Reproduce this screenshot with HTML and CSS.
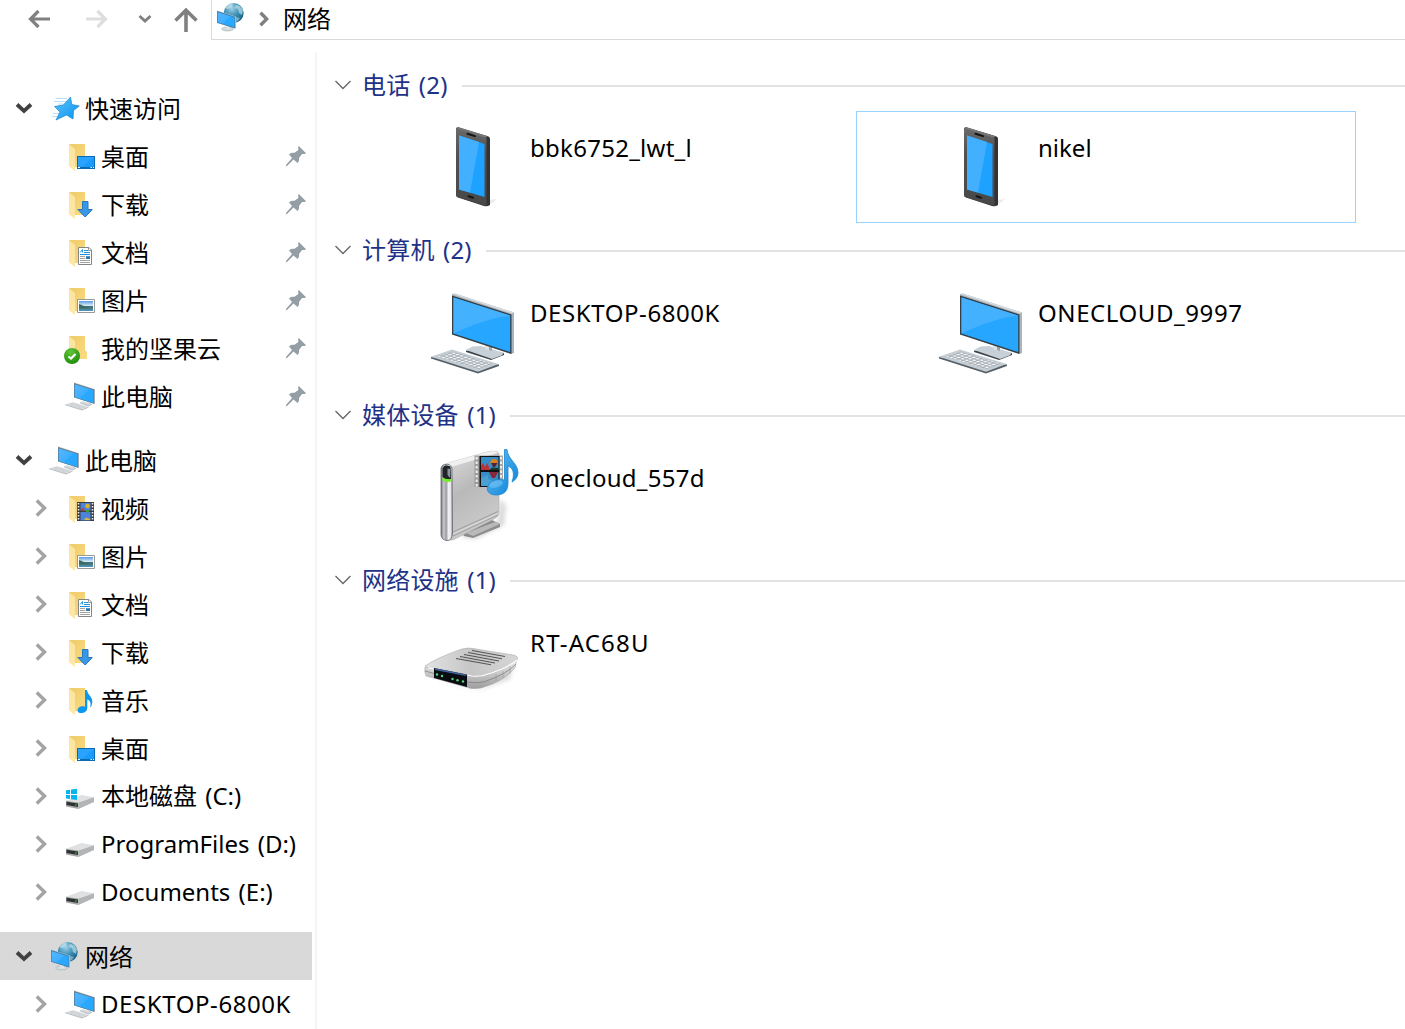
FILE: index.html
```html
<!DOCTYPE html>
<html lang="zh-CN">
<head>
<meta charset="utf-8">
<title>网络</title>
<link rel="stylesheet" href="styles.css">
</head>
<body>
<svg class="sprite" aria-hidden="true">
  <defs>
    <linearGradient id="g-screen" x1="0" y1="0" x2="1" y2="1"><stop offset="0" stop-color="#55b6ff"/><stop offset=".5" stop-color="#3eafff"/><stop offset=".54" stop-color="#2aa8ff"/><stop offset="1" stop-color="#2aa8ff"/></linearGradient>
    <linearGradient id="g-fold" x1="0" y1="0" x2="1" y2="1"><stop offset="0" stop-color="#efcb69"/><stop offset="1" stop-color="#fbdc84"/></linearGradient>
    <linearGradient id="g-flap" x1="0" y1="0" x2="0" y2="1"><stop offset="0" stop-color="#fbe3a0"/><stop offset="1" stop-color="#ffe9a8"/></linearGradient>
    <linearGradient id="g-star" x1="0" y1="0" x2="1" y2="1"><stop offset="0" stop-color="#5cc4fb"/><stop offset="1" stop-color="#0a92f0"/></linearGradient>
    <linearGradient id="g-phone" x1="0" y1="0" x2="0" y2="1"><stop offset="0" stop-color="#6a6a6a"/><stop offset=".35" stop-color="#505050"/><stop offset="1" stop-color="#484848"/></linearGradient>
    <linearGradient id="g-case" x1="0" y1="0" x2=".4" y2="1"><stop offset="0" stop-color="#dedede"/><stop offset=".5" stop-color="#b9b9b9"/><stop offset="1" stop-color="#cbcbcb"/></linearGradient>
    <linearGradient id="g-front" x1="0" y1="0" x2="1" y2="0"><stop offset="0" stop-color="#77777b"/><stop offset=".25" stop-color="#c9cacf"/><stop offset=".45" stop-color="#9a9ba2"/><stop offset=".65" stop-color="#f0f0f5"/><stop offset=".85" stop-color="#e4e5ea"/><stop offset="1" stop-color="#8b8b90"/></linearGradient>
    <linearGradient id="g-note" x1="0" y1="0" x2="1" y2="1"><stop offset="0" stop-color="#67c2f4"/><stop offset="1" stop-color="#087fd8"/></linearGradient>
    <linearGradient id="g-router" x1="0" y1="0" x2="1" y2="0"><stop offset="0" stop-color="#e2e2e2"/><stop offset=".5" stop-color="#c6c6c6"/><stop offset="1" stop-color="#d6d6d6"/></linearGradient>
    <linearGradient id="g-rim" x1="0" y1="0" x2="0" y2="1"><stop offset="0" stop-color="#f1f1f1"/><stop offset="1" stop-color="#9d9d9d"/></linearGradient>
    <radialGradient id="g-globe" cx=".4" cy=".25" r=".8"><stop offset="0" stop-color="#a3d3e6"/><stop offset=".5" stop-color="#3c8fb5"/><stop offset="1" stop-color="#15567c"/></radialGradient>
    <radialGradient id="g-ok" cx=".4" cy=".25" r=".8"><stop offset="0" stop-color="#62c536"/><stop offset="1" stop-color="#1b8a0b"/></radialGradient>
    <linearGradient id="g-photo" x1="0" y1="0" x2="0" y2="1"><stop offset="0" stop-color="#5b9be0"/><stop offset=".5" stop-color="#e4f3fb"/><stop offset=".55" stop-color="#3f7272"/><stop offset="1" stop-color="#5594bb"/></linearGradient>
    <filter id="f-soft" x="-30%" y="-30%" width="160%" height="160%"><feGaussianBlur stdDeviation="2.2"/></filter>
    <pattern id="p-keys" width="4" height="3.4" patternUnits="userSpaceOnUse" patternTransform="matrix(1 .35 -1 .42 0 0)"><rect x=".5" y=".5" width="2.9" height="2.3" fill="#f4f5f6"/></pattern>
  </defs>

  <symbol id="folder" viewBox="0 0 32 32">
    <path d="M5 4H21V18L23 20V27H10Z" fill="url(#g-fold)"/>
    <path d="M5 4L11 9V31L5 26.5Z" fill="url(#g-flap)"/>
  </symbol>
  <symbol id="desktop" viewBox="0 0 32 32">
    <use href="#folder"/>
    <path d="M13 16H31V29H13Z" fill="#0b6bb0"/><path d="M14 17H30V27H14Z" fill="#179bff"/><path d="M14 17H30L18 27H14Z" fill="#2aa3ff"/>
    <path d="M14 27.5H16M26.500 27.500H28M29 27.500H30" stroke="#fff"/>
  </symbol>
  <symbol id="download" viewBox="0 0 32 32">
    <use href="#folder"/>
    <path d="M18.500 13.500H24V21.500H28.300L21.200 29L13.800 21.500H18.500Z" fill="#3a97e8" stroke="#2478bf"/>
  </symbol>
  <symbol id="document" viewBox="0 0 32 32">
    <use href="#folder"/>
    <path d="M14.500 11.500H25L27.500 14V28.500H14.500Z" fill="#fff" stroke="#858585"/>
    <path d="M24.500 11.500V14.500H27.500" fill="none" stroke="#999"/>
    <path d="M16 16.500L18.500 13.500V16.500M20 14.500H24M20 16.500H26M16 18.500H26" fill="none" stroke="#2493dd"/>
    <path d="M16 20.500H21M16 22.500H21M16 24.500H26M16 26.500H26" stroke="#a3a3a3"/>
    <path d="M22 20.200H26V23H22Z" fill="#2b76af"/>
  </symbol>
  <symbol id="picture" viewBox="0 0 32 32">
    <use href="#folder"/>
    <path d="M13.500 15.500H30.500V28.500H13.500Z" fill="#fff" stroke="#999"/>
    <path d="M15 17H29V27H15Z" fill="url(#g-photo)"/>
    <path d="M15 20C19 21 22 24 29 24.500H15Z" fill="#3c6d63"/>
  </symbol>
  <symbol id="video" viewBox="0 0 32 32">
    <use href="#folder"/>
    <path d="M13 10H30V29H13Z" fill="#3d3d40"/>
    <path d="M14.500 11V29M28.500 11V29" stroke="#f0f0f0" stroke-width="1.600" stroke-dasharray="1.500 1.500"/>
    <path d="M16.500 11H26.500V18.500H16.500ZM16.500 20H26.500V28.500H16.500Z" fill="#4b83df"/>
    <circle cx="23.500" cy="14" r="2.300" fill="#d9b32a"/><path d="M17 17.500L19 16L21 18.500H17Z" fill="#cf3527"/><path d="M21 18H26L23.500 22Z" fill="#3b9b3b"/><path d="M20 28L22 25.500L26 27V28Z" fill="#e1ba35"/>
  </symbol>
  <symbol id="music" viewBox="0 0 32 32">
    <use href="#folder"/>
    <path d="M21 6H23C23.500 11 29 13 28.300 18.500Q28 22 26 23.500C27.300 19.500 26.500 16.500 23.300 15.500V24C23 30 13.500 30.500 13.500 26.500C13.500 23 18 21.500 21 22.700Z" fill="#0b98ee"/>
  </symbol>
  <symbol id="nutstore" viewBox="0 0 32 32">
    <path d="M5 4H21V18L23 20V27H10Z" fill="url(#g-fold)"/><path d="M5 4L11 9V30L5 26Z" fill="url(#g-flap)"/>
    <circle cx="8" cy="24" r="8" fill="url(#g-ok)"/><path d="M4.500 24.500L7 26.500L11.500 22" fill="none" stroke="#fff" stroke-width="2.200"/>
  </symbol>
  <symbol id="pc" viewBox="0 0 32 32">
    <path d="M10 2.600L31 9.200V24L10 17.500Z" fill="#a3aeb6"/>
    <path d="M10 3.300L29.900 9.500V23.700L10 17.300Z" fill="#5a7486"/>
    <path d="M10.700 4.300L29.300 10V22.900L10.700 17Z" fill="url(#g-screen)"/>
    <path d="M24 22.200L27 23.100V25L24 24Z" fill="#c3cbd0"/><path d="M16 22.500L19 21.300L28 24L24 26Z" fill="#d3d9dd"/><path d="M16 22.800L24 26L28 24.300" fill="none" stroke="#a0a8ad" stroke-width=".7"/>
    <path d="M1 24.500L8.500 22L24.500 27L18 30Z" fill="#e2e5e7"/><path d="M1 24.700L18 30L24.500 27.200" fill="none" stroke="#aab1b6" stroke-width=".8"/>
    <path d="M4.500 24.500L18.500 28.800M6.500 23.700L20.500 28M8.500 23L22.500 27.300" stroke="#b4babf" stroke-width=".8" stroke-dasharray="1.300 .8"/>
  </symbol>
  <symbol id="drive" viewBox="0 0 32 32">
    <path d="M2 20.700L17.500 15L30 17.200L14.500 22.500Z" fill="#dfe0e2"/>
    <path d="M14.500 22.500L30 17.200V22L14.500 29Z" fill="#b2b4b6"/>
    <path d="M2 20.700L14.500 22.500V29L2 26.500Z" fill="#a4a5a8"/><path d="M2.500 21.700L14 23.500V27L2.500 25Z" fill="#2f3133"/><path d="M11 25H12.800" stroke="#3add3b" stroke-width="1.200"/>
  </symbol>
  <symbol id="sysdrive" viewBox="0 0 32 32">
    <use href="#drive"/>
    <path d="M2 10.300L6 9.700V14H2ZM7 9.500L13 8.800V14H7ZM2 15H6V19L2 18.500ZM7 15H13V20L7 19.200Z" fill="#08b4ee"/>
  </symbol>
  <symbol id="star" viewBox="0 0 32 32">
    <path d="M8 6.500H19M6 9.500H18M10 12H18M5 21.500H12M4 24.500H11" stroke="#a5d6f4" stroke-width=".8"/>
    <path d="M22.500 5L23.800 12.500L31.300 14L25.500 18.500L25 27L18.500 23L8 28L12 20L6.500 14.500L15.500 13Z" fill="url(#g-star)" stroke="#1686cc" stroke-width=".7"/>
  </symbol>
  <symbol id="network" viewBox="0 0 32 32">
    <circle cx="19.700" cy="12" r="10" fill="url(#g-globe)"/>
    <path d="M11 7L15 3L19 2.500L18 6L14 8ZM22 4L26 5L29 9L28 14L25 12L24 8L21 7Z" fill="#c7e5ed" opacity=".65"/><path d="M22 16L26 17L24 20L22 21Z" fill="#8bbacb" opacity=".8"/>
    <ellipse cx="13.500" cy="28" rx="5.800" ry="2" fill="#d3dade" stroke="#98a3a9" stroke-width=".5"/><path d="M12 25H16V28H12Z" fill="#dde4e8"/>
    <path d="M3 9.500L22 15.500V27.500L3 22Z" fill="#b9c7cf"/><path d="M3 10L21.200 15.700V27.500L3 21.800Z" fill="#3d80ad"/>
    <path d="M3.700 11.200L20.500 16.400V26.300L3.700 21.200Z" fill="url(#g-screen)"/>
  </symbol>
  <symbol id="pin" viewBox="0 0 20 20">
    <path d="M12.800 0L20 7.200C18 8.500 17 8 16 8L13 12C13.500 14.500 12.500 16 11.500 17L7.500 13.500L1 20H0V19L6 12L3 8.500C4.500 7 6.500 6.500 8 7L12.500 4C12 2.500 12 1 12.800 0Z" fill="#939ea5"/>
  </symbol>
  <symbol id="open" viewBox="0 0 18 12"><path d="M2 2.500L9 9L16 2.500" fill="none" stroke="#404040" stroke-width="3.800"/></symbol>
  <symbol id="closed" viewBox="0 0 12 18"><path d="M1.800 1.500L9.500 9L1.800 16.500" fill="none" stroke="#a3a3a3" stroke-width="3.400"/></symbol>
  <symbol id="collapse" viewBox="0 0 16 10"><path d="M.5 1L8 8.500L15.500 1" fill="none" stroke="#666" stroke-width="1.300"/></symbol>

  <symbol id="phone" viewBox="0 0 96 96">
    <path d="M58 82L73 80L67 85Z" fill="#ddd" opacity=".6"/>
    <path d="M34 8.300Q32 8 32 10.500V76Q32 77.500 34 78.500L60 87Q63 88 66 86V20Q66 18 64 17.300Z" fill="#333"/>
    <path d="M34 8.800Q32 8.500 32 10.500V76Q32 77.500 34 78.200L62.500 87V19Z" fill="url(#g-phone)"/>
    <path d="M35 8.300L64 17.500L61 18.800L33 9.500Z" fill="#777"/>
    <path d="M35 16.500L60.500 25V78L35 70.500Z" fill="#1da2ff"/><path d="M35 16.500L55 23L46 73.500L35 70.500Z" fill="#43b0ff"/>
    <path d="M43.500 14.700L51 17.100M44.500 77.300L49 78.700" stroke="#151515" stroke-width="2" stroke-linecap="round"/>
  </symbol>
  <symbol id="computer" viewBox="0 0 96 96">
    <path d="M42 66.500V68L67 76L80 71V69Z" fill="#3b444a"/><path d="M42 66L48.500 62.500L57 62L80 68.800L77.500 71.500L68 75Z" fill="#c6d0d6"/><path d="M61 59L67.500 62V67L61 65Z" fill="#e0e3e5"/><path d="M65 62L68 63V67L65 66Z" fill="#9aa4aa"/>
    <path d="M28 10L31 9.500L90 28.500V69L87 70L28 50Z" fill="#aab4bb"/><path d="M28 10L31 9.500L90 28.500L87.500 29.500Z" fill="#d6dce0"/>
    <path d="M28 11.500L87.500 30.500V70L28 50.500Z" fill="#343f46"/>
    <path d="M29.500 13.500L86.200 31.500V68L29.500 49.500Z" fill="#27a6ff"/><path d="M29.500 13.500L86.200 31.500L84 32Q63 34 29.500 49.500Z" fill="#44b1ff"/>
    <path d="M7 73V74.500L54 89.500L75 82V80.500Z" fill="#566068"/><path d="M7 72.700L28 65.500L74.500 80L54 87.700Z" fill="#c4cdd3"/>
    <path d="M14 72.500L29 67.500L69 80L54 85Z" fill="#9ba5ac"/><path d="M14 72.500L29 67.500L69 80L54 85Z" fill="url(#p-keys)"/>
  </symbol>
  <symbol id="media" viewBox="0 0 96 96">
    <path d="M35 88L74 72L76 50L82 56L80 76L52 90Z" fill="#777" opacity=".28" filter="url(#f-soft)"/>
    <path d="M38 84L68 71L76 75V78L49 89L40 87Z" fill="#8c8c8c"/><path d="M42 84L71 73L76 75L49 87Z" fill="#b9b9b9"/>
    <path d="M24 14L65 2.500Q74 1 75 5V64Q74 68 70 70L29 91L22 91Z" fill="url(#g-case)" stroke="#a5a5a5" stroke-width=".5"/>
    <path d="M20 15L65 2.500Q72 1 74 4L27 18Z" fill="#efefef"/>
    <path d="M29 83L74 62.500M29 87L74 66" stroke="#929292" stroke-width=".8"/><path d="M29 85L74 64.500" stroke="#dcdcdc"/>
    <path d="M17 19Q18 15 23 15Q28 16 28 20L28.500 84Q28 92 23 91.500Q17.500 91 17 86Z" fill="url(#g-front)" stroke="#68686c" stroke-width=".8"/>
    <path d="M18.500 19Q21 15 26.500 17.500L27 30Q22 32 18.500 28Z" fill="#202428"/><path d="M23.500 19.500L26 20V29L23.500 26Z" fill="#8996a2"/>
    <path d="M18.500 28.500Q22 31 27.500 30V32.300Q22 34 18.500 31Z" fill="#70f31e"/>
    <path d="M50.500 6.500H79V38H50.500Z" fill="#8d8d8d" opacity=".75"/>
    <path d="M52.700 8V38M77 8V38" stroke="#eee" stroke-width="2" stroke-dasharray="2.500 2"/>
    <path d="M55.500 7H75.500V38H55.500Z" fill="#111"/><path d="M57 8H74.500V21H57ZM57 23H74.500V37H57Z" fill="#368ec6"/>
    <path d="M57 21V17L59 14L61 18L63 14L65 18V21Z" fill="#bd2f39"/><circle cx="70" cy="13.500" r="3.600" fill="#dc811f"/><path d="M67 14H73.500L71 18H69Z" fill="#4b2341"/><path d="M65 21L68 18.500L74.500 19V21Z" fill="#173c28"/>
    <path d="M65 23H74L71 29H68Z" fill="#84283a"/><path d="M57 29L64 26V30L70 32L67 37H57Z" fill="#4a9fd5"/>
    <path d="M80.500 .5H83C84 11 94 14 94 24Q93.500 30 88 33C91 24 89 19 84 17V34C84 41 81 46 72 46C64 46 61 40 65 35C68 31 75 29.500 80.500 31Z" fill="url(#g-note)" stroke="#1685d0" stroke-width=".8"/>
    <ellipse cx="72" cy="35" rx="7" ry="3.500" fill="#7dc9f5" opacity=".55" transform="rotate(-15 72 35)"/>
  </symbol>
  <symbol id="router" viewBox="0 0 96 96">
    <path d="M10 68L55 75L90 56V50L86 65L55 76Z" fill="#777" opacity=".28" filter="url(#f-soft)"/>
    <path d="M1 53Q0 58 2 62L47 74.500Q56 75.500 63 72Q81 66 91 54L93 45L56 62Z" fill="url(#g-rim)" stroke="#aaa" stroke-width=".5"/>
    <path d="M1 52Q12 44 38 35Q44 33 52 35L89 41Q95 42 93 46Q81 56 62 61Q55 63 48 62L4 54Z" fill="url(#g-router)" stroke="#adadad" stroke-width=".6"/>
    <path d="M4 54L48 62Q57 63 64 60Q82 55 93 46" fill="none" stroke="#fff" stroke-width="1.200"/>
    <path d="M1 57L10 59.500M43 68Q57 70 65 66Q82 60 92 50" fill="none" stroke="#777" stroke-width=".7"/><path d="M72 60V67M79 57V64M86 52V60" stroke="#999" stroke-width=".6"/>
    <path d="M48 36.500L81 42.500M44 38.500L78 44.800M40 40.500L75 47M36 42.500L71 49M32 44.500L67 50.700" stroke="#555" stroke-width="1.100"/>
    <path d="M10 54L43 60.500V73L10 64Z" fill="#090d12"/><path d="M11 54.300L42 60.500V62L11 56Z" fill="#40659e"/>
    <g fill="#55d979"><circle cx="13" cy="60.500" r="1.200"/><circle cx="18" cy="62" r="1.200"/><circle cx="28.500" cy="65" r="1.200"/><circle cx="33.500" cy="66.300" r="1.200"/><circle cx="39" cy="67.500" r="1.200"/></g>
  </symbol>
</svg>

<header class="topbar">
  <nav class="nav">
    <svg class="arrow" viewBox="0 0 22 20"><path d="M22 10H3M10.500 2L2.500 10L10.500 18" fill="none" stroke="#808080" stroke-width="3.200"/></svg>
    <svg class="arrow forward" viewBox="0 0 22 20"><path d="M0 10H19M11.500 2L19.500 10L11.500 18" fill="none" stroke="#dedede" stroke-width="3.200"/></svg>
    <svg class="recent" viewBox="0 0 14 10"><path d="M1.500 2L7 7L12.500 2" fill="none" stroke="#808080" stroke-width="2.800"/></svg>
    <svg class="up" viewBox="0 0 24 24"><path d="M12 24V2.500M1.500 12.500L12 2.200L22.500 12.500" fill="none" stroke="#808080" stroke-width="3.600"/></svg>
  </nav>
  <div class="address">
    <svg class="icon"><use href="#network"/></svg>
    <svg class="crumb" viewBox="0 0 10 16"><path d="M1.500 1.800L7.700 8L1.500 14.200" fill="none" stroke="#808080" stroke-width="3.400"/></svg>
    <span class="label">网络</span>
  </div>
</header>

<div class="panes">
  <aside class="tree">
    <section class="branch">
      <div class="row root"><svg class="open"><use href="#open"/></svg><svg class="icon"><use href="#star"/></svg><span class="label zh">快速访问</span></div>
      <div class="row"><svg class="icon"><use href="#desktop"/></svg><span class="label zh">桌面</span><svg class="pin"><use href="#pin"/></svg></div>
      <div class="row"><svg class="icon"><use href="#download"/></svg><span class="label zh">下载</span><svg class="pin"><use href="#pin"/></svg></div>
      <div class="row"><svg class="icon"><use href="#document"/></svg><span class="label zh">文档</span><svg class="pin"><use href="#pin"/></svg></div>
      <div class="row"><svg class="icon"><use href="#picture"/></svg><span class="label zh">图片</span><svg class="pin"><use href="#pin"/></svg></div>
      <div class="row"><svg class="icon"><use href="#nutstore"/></svg><span class="label zh">我的坚果云</span><svg class="pin"><use href="#pin"/></svg></div>
      <div class="row"><svg class="icon"><use href="#pc"/></svg><span class="label zh">此电脑</span><svg class="pin"><use href="#pin"/></svg></div>
    </section>
    <section class="branch">
      <div class="row root"><svg class="open"><use href="#open"/></svg><svg class="icon"><use href="#pc"/></svg><span class="label zh">此电脑</span></div>
      <div class="row"><svg class="closed"><use href="#closed"/></svg><svg class="icon"><use href="#video"/></svg><span class="label zh">视频</span></div>
      <div class="row"><svg class="closed"><use href="#closed"/></svg><svg class="icon"><use href="#picture"/></svg><span class="label zh">图片</span></div>
      <div class="row"><svg class="closed"><use href="#closed"/></svg><svg class="icon"><use href="#document"/></svg><span class="label zh">文档</span></div>
      <div class="row"><svg class="closed"><use href="#closed"/></svg><svg class="icon"><use href="#download"/></svg><span class="label zh">下载</span></div>
      <div class="row"><svg class="closed"><use href="#closed"/></svg><svg class="icon"><use href="#music"/></svg><span class="label zh">音乐</span></div>
      <div class="row"><svg class="closed"><use href="#closed"/></svg><svg class="icon"><use href="#desktop"/></svg><span class="label zh">桌面</span></div>
      <div class="row"><svg class="closed"><use href="#closed"/></svg><svg class="icon"><use href="#sysdrive"/></svg><span class="label">本地磁盘 (C:)</span></div>
      <div class="row"><svg class="closed"><use href="#closed"/></svg><svg class="icon"><use href="#drive"/></svg><span class="label">ProgramFiles (D:)</span></div>
      <div class="row"><svg class="closed"><use href="#closed"/></svg><svg class="icon"><use href="#drive"/></svg><span class="label">Documents (E:)</span></div>
    </section>
    <section class="branch">
      <div class="row root selected"><svg class="open"><use href="#open"/></svg><svg class="icon"><use href="#network"/></svg><span class="label zh">网络</span></div>
      <div class="row"><svg class="closed"><use href="#closed"/></svg><svg class="icon"><use href="#pc"/></svg><span class="label caps">DESKTOP-6800K</span></div>
    </section>
  </aside>

  <main class="content">
    <section class="group">
      <h2 class="heading"><svg class="collapse"><use href="#collapse"/></svg><span class="title">电话 (2)</span></h2>
      <div class="tiles">
        <div class="tile"><svg class="device"><use href="#phone"/></svg><span class="name">bbk6752_lwt_l</span></div>
        <div class="tile focused"><svg class="device"><use href="#phone"/></svg><span class="name short">nikel</span></div>
      </div>
    </section>
    <section class="group">
      <h2 class="heading"><svg class="collapse"><use href="#collapse"/></svg><span class="title">计算机 (2)</span></h2>
      <div class="tiles">
        <div class="tile"><svg class="device"><use href="#computer"/></svg><span class="name caps">DESKTOP-6800K</span></div>
        <div class="tile"><svg class="device"><use href="#computer"/></svg><span class="name caps">ONECLOUD_9997</span></div>
      </div>
    </section>
    <section class="group">
      <h2 class="heading"><svg class="collapse"><use href="#collapse"/></svg><span class="title">媒体设备 (1)</span></h2>
      <div class="tiles">
        <div class="tile"><svg class="device"><use href="#media"/></svg><span class="name">onecloud_557d</span></div>
      </div>
    </section>
    <section class="group">
      <h2 class="heading"><svg class="collapse"><use href="#collapse"/></svg><span class="title">网络设施 (1)</span></h2>
      <div class="tiles">
        <div class="tile"><svg class="device"><use href="#router"/></svg><span class="name model">RT-AC68U</span></div>
      </div>
    </section>
  </main>
</div>
</body>
</html>
```
FILE: styles.css
```css
* { box-sizing: border-box; }

body {
  margin: 0;
  height: 1029px;
  overflow: hidden;
  background: #fff;
  color: #000;
  font: 24px/32px "Noto Sans", "Noto Sans CJK SC", sans-serif;
}

svg { display: block; flex: none; }
.sprite { position: absolute; width: 0; height: 0; }

/* Navigation and address bar */
.topbar { display: flex; height: 40px; }
.nav { display: flex; align-items: center; width: 211px; height: 38px; padding-left: 28px; }
.arrow { width: 22px; height: 20px; }
.forward { margin-left: 36px; }
.recent { width: 14px; height: 10px; margin-left: 30px; }
.up { width: 24px; height: 24px; margin: 1px 0 0 22px; }
.address {
  display: flex;
  flex: 1;
  align-items: center;
  padding: 0 0 2px 2px;
  border: solid #d9d9d9;
  border-width: 0 0 1px 1px;
}
.address .icon { margin-bottom: 4px; }
.crumb { width: 10px; height: 16px; margin: 0 14px 0 13px; }

/* Folder tree */
.panes { display: flex; height: 977px; margin-top: 12px; }
.tree {
  display: flex;
  flex: none;
  flex-direction: column;
  gap: 16px;
  width: 317px;
  padding-top: 32px;
  border-right: 2px solid #f5f5f5;
}
.row { display: flex; align-items: center; width: 312px; height: 48px; padding-left: 64px; }
.row.root { padding-left: 15px; }
.row:has(.closed) { padding-left: 35px; }
.row.selected { background: #d9d9d9; }
.icon { width: 32px; height: 32px; }
.label { white-space: pre; }
.row .label { margin-left: 5px; word-spacing: 2px; }
.row .zh { padding-top: 2px; }
.open { width: 18px; height: 12px; margin-right: 15px; }
.closed { width: 12px; height: 18px; margin-right: 17px; }
.pin { width: 20px; height: 20px; margin: 0 6px 0 auto; }

/* Device groups */
.content { flex: 1; padding-top: 9px; overflow: hidden; }
.group { height: 165px; }
.heading {
  display: flex;
  align-items: center;
  height: 50px;
  margin: 0;
  padding-left: 18px;
  color: #1e3287;
  font-size: 24px;
  font-weight: 400;
}
.heading::after { content: ""; flex: 1; height: 2px; margin-left: 14px; background: #e3e3e3; }
.collapse { width: 16px; height: 10px; margin: 0 11px 2px 0; }
.title { padding-bottom: 2px; letter-spacing: .2px; word-spacing: 2px; }
.tiles { display: flex; gap: 8px; padding-left: 31px; }
.tile {
  display: flex;
  width: 500px;
  height: 112px;
  padding: 7px 0 0 75px;
  border: 1px solid transparent;
}
.focused { border-color: #99d1ff; }
.device { width: 96px; height: 96px; }
.name { margin: 13px 0 0 10px; letter-spacing: .27px; }
.caps { letter-spacing: .58px; }
.short { letter-spacing: 0; }
.model { letter-spacing: 1.2px; }
```
